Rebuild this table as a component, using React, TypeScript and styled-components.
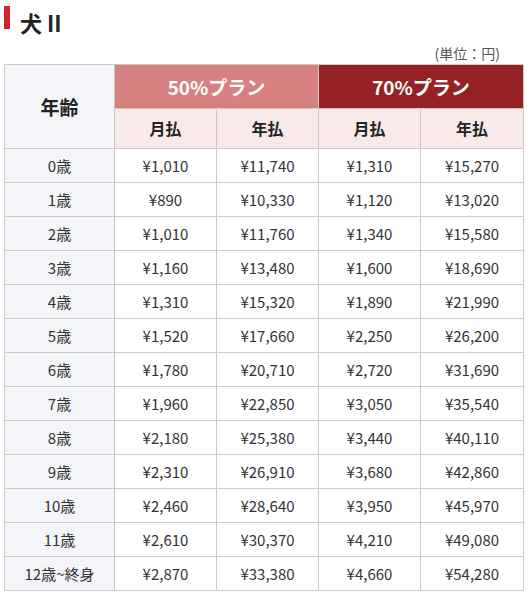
import React from "react";
import styled, { createGlobalStyle } from "styled-components";

const Global = createGlobalStyle`
  body {
    margin: 0;
    background: #fff;
    font-family: "Noto Sans CJK JP", "Noto Sans", sans-serif;
    color: #333;
  }
`;

const Page = styled.div`
  width: 529px;
  padding: 6px 0 0 4px;
  box-sizing: border-box;
`;

const Title = styled.h2`
  margin: 0;
  display: flex;
  align-items: flex-start;
  gap: 10px;
  height: 30px;
  font-size: 22px;
  font-weight: 700;
  color: #222;
  line-height: 32px;
  &::before {
    content: "";
    flex: none;
    width: 6px;
    height: 23px;
    background: #d0262a;
  }
`;

const Unit = styled.div`
  margin: 7px 29px 0 0;
  height: 21px;
  text-align: right;
  font-size: 14px;
  line-height: 20px;
  color: #555;
`;

const Table = styled.table`
  border-collapse: collapse;
  table-layout: fixed;
  width: 519px;
`;

const Cell = styled.td<{ $bg?: string; $color?: string; $size?: number; $bold?: boolean; $h?: number }>`
  border: 1px solid #cacaca;
  padding: 0 0 1px;
  text-align: center;
  vertical-align: middle;
  height: ${(p) => (p.$h ?? 33) - 1}px;
  background: ${(p) => p.$bg ?? "#fff"};
  color: ${(p) => p.$color ?? "#333"};
  font-size: ${(p) => p.$size ?? 15}px;
  font-weight: ${(p) => (p.$bold ? 700 : 400)};
`;

const rows: [string, string, string, string, string][] = [
  ["0歳", "¥1,010", "¥11,740", "¥1,310", "¥15,270"],
  ["1歳", "¥890", "¥10,330", "¥1,120", "¥13,020"],
  ["2歳", "¥1,010", "¥11,760", "¥1,340", "¥15,580"],
  ["3歳", "¥1,160", "¥13,480", "¥1,600", "¥18,690"],
  ["4歳", "¥1,310", "¥15,320", "¥1,890", "¥21,990"],
  ["5歳", "¥1,520", "¥17,660", "¥2,250", "¥26,200"],
  ["6歳", "¥1,780", "¥20,710", "¥2,720", "¥31,690"],
  ["7歳", "¥1,960", "¥22,850", "¥3,050", "¥35,540"],
  ["8歳", "¥2,180", "¥25,380", "¥3,440", "¥40,110"],
  ["9歳", "¥2,310", "¥26,910", "¥3,680", "¥42,860"],
  ["10歳", "¥2,460", "¥28,640", "¥3,950", "¥45,970"],
  ["11歳", "¥2,610", "¥30,370", "¥4,210", "¥49,080"],
  ["12歳~終身", "¥2,870", "¥33,380", "¥4,660", "¥54,280"],
];

const AGE_BG = "#f4f5f9";
const SUB_BG = "#f9e9e9";

export default function App() {
  return (
    <>
      <Global />
      <Page>
        <Title>犬 II</Title>
        <Unit>(単位：円)</Unit>
        <Table>
          <colgroup>
            <col style={{ width: 110 }} />
            <col style={{ width: 102 }} />
            <col style={{ width: 102 }} />
            <col style={{ width: 102 }} />
            <col style={{ width: 103 }} />
          </colgroup>
          <thead>
            <tr>
              <Cell as="th" rowSpan={2} $bg={AGE_BG} $size={19} $bold $color="#222" $h={43}>
                年齢
              </Cell>
              <Cell as="th" colSpan={2} $bg="#d68080" $color="#fff" $size={19} $bold $h={43}>
                50%プラン
              </Cell>
              <Cell as="th" colSpan={2} $bg="#942224" $color="#fff" $size={19} $bold $h={43}>
                70%プラン
              </Cell>
            </tr>
            <tr>
              <Cell as="th" $bg={SUB_BG} $size={16} $bold $color="#222" $h={39}>月払</Cell>
              <Cell as="th" $bg={SUB_BG} $size={16} $bold $color="#222" $h={39}>年払</Cell>
              <Cell as="th" $bg={SUB_BG} $size={16} $bold $color="#222" $h={39}>月払</Cell>
              <Cell as="th" $bg={SUB_BG} $size={16} $bold $color="#222" $h={39}>年払</Cell>
            </tr>
          </thead>
          <tbody>
            {rows.map((r) => (
              <tr key={r[0]}>
                <Cell $bg={AGE_BG} $size={15}>{r[0]}</Cell>
                <Cell>{r[1]}</Cell>
                <Cell>{r[2]}</Cell>
                <Cell>{r[3]}</Cell>
                <Cell>{r[4]}</Cell>
              </tr>
            ))}
          </tbody>
        </Table>
      </Page>
    </>
  );
}
